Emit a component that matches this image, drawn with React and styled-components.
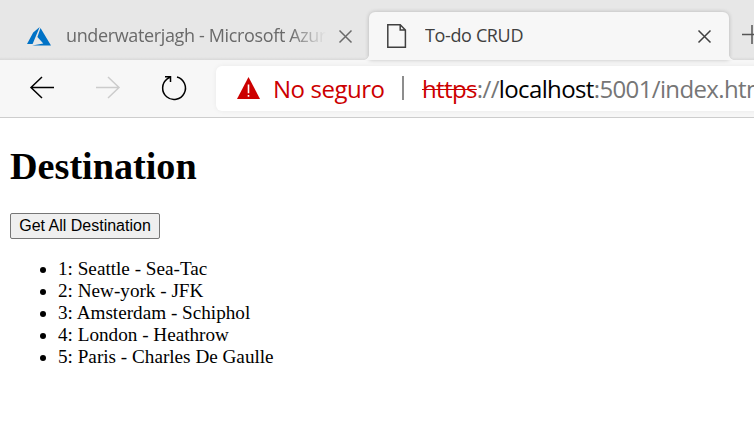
import React from "react";
import styled, { createGlobalStyle } from "styled-components";

const GlobalStyle = createGlobalStyle`
  body { margin: 0; background: #fff; overflow: hidden; }
  * { box-sizing: border-box; }
`;

const Window = styled.div`
  width: 754px;
  height: 427px;
  overflow: hidden;
  background: #fff;
`;

const TabStrip = styled.div`
  display: flex;
  align-items: flex-end;
  height: 60px;
  background: linear-gradient(#e7e7e7 57px, #d9d9d9 60px);
`;

const Tab = styled.div`
  position: relative;
  display: flex;
  align-items: center;
  flex: none;
  width: ${(p) => (p.$active ? 360 : 369)}px;
  height: 48px;
  padding-left: ${(p) => (p.$active ? 18 : 26)}px;
  border-radius: 6px 6px 0 0;
  background: ${(p) => (p.$active ? "#f7f7f7" : "transparent")};
  box-shadow: ${(p) => (p.$active ? "0 0 4px rgba(0,0,0,0.22)" : "none")};
  color: ${(p) => (p.$active ? "#404040" : "#6a6a6a")};

  &::before,
  &::after {
    content: ${(p) => (p.$active ? '""' : "none")};
    position: absolute;
    bottom: 0;
    width: 5px;
    height: 5px;
  }
  &::before {
    left: -5px;
    background: radial-gradient(circle at 0 0, transparent 4.5px, #f7f7f7 5px);
  }
  &::after {
    right: -5px;
    background: radial-gradient(circle at 100% 0, transparent 4.5px, #f7f7f7 5px);
  }
`;

const TabTitle = styled.span`
  flex: none;
  width: ${(p) => p.$width}px;
  margin-left: ${(p) => p.$gap}px;
  padding-bottom: 2px;
  overflow: hidden;
  white-space: nowrap;
  font: 400 18px/26px "Open Sans", sans-serif;
  letter-spacing: -0.36px;
  mask-image: ${(p) => (p.$fade ? "linear-gradient(to right, #000 86%, transparent)" : "none")};
`;

const Icon = styled.svg`
  display: block;
  flex: none;
  margin-left: ${(p) => p.$gap || 0}px;
  overflow: visible;
`;

const Toolbar = styled.div`
  display: flex;
  align-items: center;
  height: 58px;
  padding: 0 0 2px 30px;
  background: #f7f7f7;
  border-bottom: 1px solid #cdcdcd;
`;

const AddressBar = styled.div`
  display: flex;
  align-items: center;
  flex: none;
  width: 560px;
  height: 45px;
  margin: 2px 0 0 30px;
  padding: 0 0 2px 21px;
  border-radius: 6px;
  background: #fff;
  box-shadow: 0 0 5px rgba(0, 0, 0, 0.06);
  font: 400 24px/34px "Open Sans", sans-serif;
  white-space: nowrap;
`;

const Warning = styled.span`
  width: 113px;
  padding-top: 2px;
  margin-left: 13px;
  color: #c00;
  letter-spacing: -0.45px;
`;

const Divider = styled.span`
  width: 2px;
  height: 24px;
  margin: 0 18px 0 16px;
  background: #8d8d8d;
`;

const Url = styled.span`
  padding-top: 2px;
  color: #767676;
  letter-spacing: -0.63px;
`;

const Scheme = styled.span`
  color: #c00;
  text-decoration: line-through 1px;
`;

const Host = styled.span`
  color: #000;
`;

const Page = styled.main`
  padding: 25px 10px;
  font-family: "Liberation Serif", serif;
  color: #000;
`;

const Heading = styled.h1`
  margin: 0 0 24px;
  font-size: 38.2px;
  line-height: 46px;
`;

const FetchButton = styled.button`
  display: block;
  width: 150px;
  height: 26px;
  padding: 0;
  border: 1px solid #767676;
  border-radius: 2px;
  background: #efefef;
  color: #000;
  font: 16px/22px "Liberation Sans", sans-serif;
  white-space: nowrap;
`;

const List = styled.ul`
  margin: 19px 0 0;
  padding-left: 48px;
  font-size: 19.18px;
  line-height: 22px;
`;

const destinations = [
  "1: Seattle - Sea-Tac",
  "2: New-york - JFK",
  "3: Amsterdam - Schiphol",
  "4: London - Heathrow",
  "5: Paris - Charles De Gaulle",
];

const CloseIcon = ({ gap }) => (
  <Icon $gap={gap} width="13" height="13" viewBox="0 0 13 13" fill="none" stroke="currentColor" strokeWidth="1.5">
    <path d="M.5.5l12 12M12.5.5l-12 12" />
  </Icon>
);

export default function App() {
  return (
    <Window>
      <GlobalStyle />
      <TabStrip>
        <Tab>
          <Icon width="26" height="22" viewBox="0 0 26 22" fill="#0072c6">
            <path d="M13.7 2L7.2 7.6 1 19h5.6zM14.5 3.1l-3.1 8.9 5.9 6.6L6.2 20.6H25z" />
          </Icon>
          <TabTitle $width={260} $gap={14} $fade>underwaterjagh - Microsoft Azur</TabTitle>
          <CloseIcon gap={13} />
        </Tab>
        <Tab $active>
          <Icon width="20" height="24" viewBox="0 0 20 24" fill="none" stroke="currentColor" strokeWidth="1.5">
            <path d="M.8.8h12.4l5.2 5.2v17.2H.8zM13.2.8V6h5.2" />
          </Icon>
          <TabTitle $width={250} $gap={18}>To-do CRUD</TabTitle>
          <CloseIcon gap={23} />
        </Tab>
        <Icon $gap={13} width="20" height="48" viewBox="0 0 20 48" fill="none" stroke="#555" strokeWidth="1.5">
          <path d="M0 22.5h20M10 13v19" />
        </Icon>
      </TabStrip>
      <Toolbar>
        <Icon width="24" height="22" viewBox="0 0 24 22" fill="none" stroke="#000" strokeWidth="1.5">
          <path d="M24 10.5H1M12 0L1 10.5 12 21" />
        </Icon>
        <Icon $gap={42} width="24" height="22" viewBox="0 0 24 22" fill="none" stroke="#ccc" strokeWidth="1.5">
          <path d="M0 10.5h23M12 0l11 10.5L12 21" />
        </Icon>
        <Icon $gap={41} width="25" height="25" viewBox="0 0 25 25" fill="none" stroke="#000" strokeWidth="1.5">
          <path d="M16 2A11.4 11.4 0 1 1 6.2 3.9L9.5 1.8M4 1.8h5.5v5.2" />
        </Icon>
        <AddressBar>
          <Icon width="23" height="22" viewBox="0 0 23 22">
            <path d="M11.5 0L23 22H0z" fill="#c00" />
            <path d="M11.5 7.5v8.7M11.5 18v1.7" stroke="#fff" strokeWidth="1.6" />
          </Icon>
          <Warning>No seguro</Warning>
          <Divider />
          <Url>
            <Scheme>https</Scheme>://<Host>localhost</Host>:5001/index.htm
          </Url>
        </AddressBar>
      </Toolbar>
      <Page>
        <Heading>Destination</Heading>
        <FetchButton>Get All Destination</FetchButton>
        <List>
          {destinations.map((item) => (
            <li key={item}>{item}</li>
          ))}
        </List>
      </Page>
    </Window>
  );
}
